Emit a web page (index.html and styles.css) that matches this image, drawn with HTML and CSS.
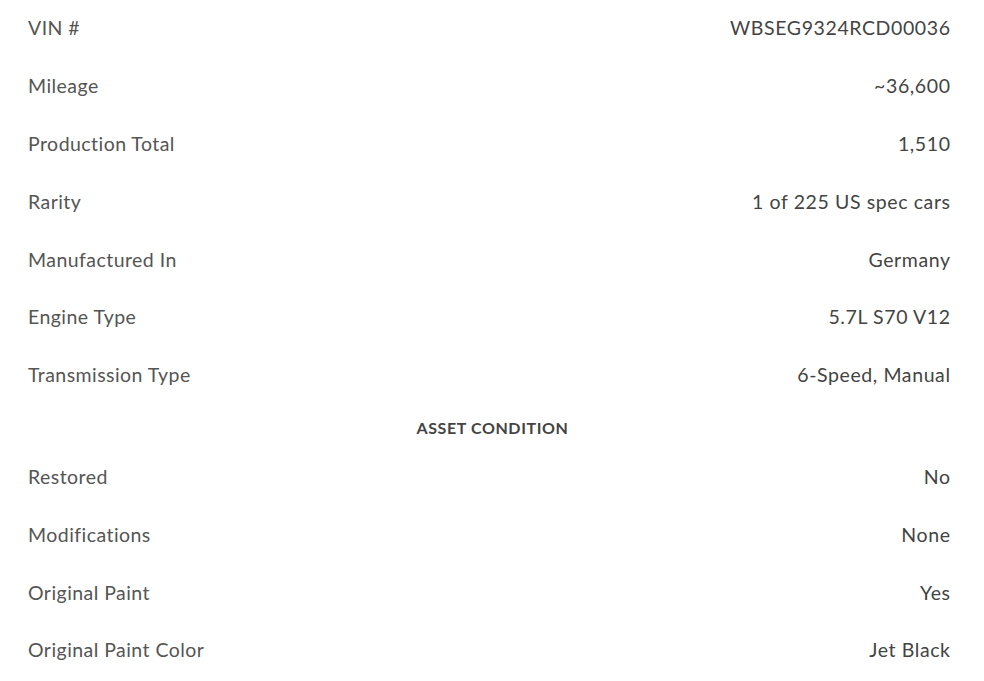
FILE: index.html
```html
<!DOCTYPE html>
<html lang="en">
<head>
<meta charset="utf-8">
<title>Asset Details</title>
<link rel="stylesheet" href="styles.css">
</head>
<body>
<div class="specs">
  <div class="row"><span class="label">VIN #</span><span class="value">WBSEG9324RCD00036</span></div>
  <div class="row"><span class="label">Mileage</span><span class="value">~36,600</span></div>
  <div class="row"><span class="label">Production Total</span><span class="value">1,510</span></div>
  <div class="row"><span class="label">Rarity</span><span class="value">1 of 225 US spec cars</span></div>
  <div class="row"><span class="label">Manufactured In</span><span class="value">Germany</span></div>
  <div class="row"><span class="label">Engine Type</span><span class="value">5.7L S70 V12</span></div>
  <div class="row"><span class="label">Transmission Type</span><span class="value">6-Speed, Manual</span></div>
  <h3 class="heading">ASSET CONDITION</h3>
  <div class="row"><span class="label">Restored</span><span class="value">No</span></div>
  <div class="row"><span class="label">Modifications</span><span class="value">None</span></div>
  <div class="row"><span class="label">Original Paint</span><span class="value">Yes</span></div>
  <div class="row"><span class="label">Original Paint Color</span><span class="value">Jet Black</span></div>
</div>
</body>
</html>
```

FILE: styles.css
```css
html, body {
  margin: 0;
  padding: 0;
  background: #ffffff;
}
body {
  font-family: Lato, "Liberation Sans", sans-serif;
  color: #4a4a4a;
}
.specs {
  display: flex;
  flex-direction: column;
  margin-top: -1px;
  padding: 0 34px 0 28px;
}
.row {
  display: flex;
  justify-content: space-between;
  align-items: center;
  height: 57.8px;
  font-size: 19.5px;
  letter-spacing: 0.45px;
}
.label {
  color: #555555;
}
.value {
  color: #444444;
  letter-spacing: 0.6px;
  margin-right: -0.6px;
}
.heading {
  margin: 0;
  height: 44px;
  padding-top: 4px;
  padding-left: 7px;
  box-sizing: border-box;
  line-height: 40px;
  text-align: center;
  font-size: 16px;
  font-weight: 700;
  letter-spacing: 0.6px;
  color: #444444;
}
```
